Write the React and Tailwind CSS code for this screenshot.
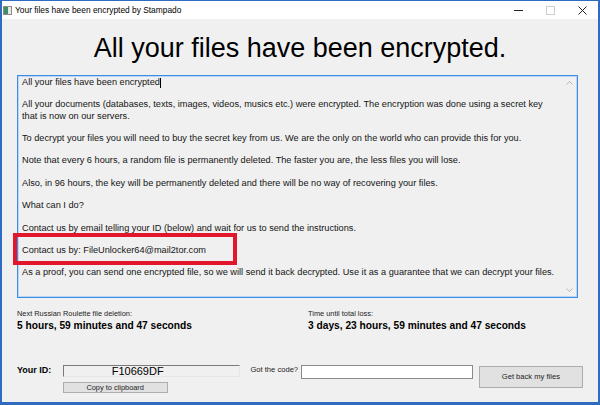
export default function App() {
  return (
    <div className="relative w-[600px] h-[405px] overflow-hidden bg-[#f0f0f0] border-x-2 border-t border-b-[3px] border-[#2f6cc0] flex flex-col font-['Liberation_Sans',Arial,sans-serif] text-black">
      {/* title bar */}
      <div className="h-[18px] shrink-0 bg-white flex items-center pl-[1px]">
        <svg width="9" height="9" viewBox="0 0 9 9">
          <rect x="0.5" y="0.5" width="8" height="8" fill="#e8e8e8" stroke="#8c8c8c" />
          <rect x="1" y="1" width="4" height="7" fill="#3f8f64" />
        </svg>
        <span className="ml-[3px] text-[8.4px] leading-none">Your files have been encrypted by Stampado</span>
        <div className="ml-auto flex h-full items-center">
          <div className="w-[32px] flex justify-center">
            <div className="w-[9px] h-[1px] bg-[#222]" />
          </div>
          <div className="w-[32px] flex justify-center">
            <div className="w-[9px] h-[9px] border border-[#cfcfcf]" />
          </div>
          <div className="w-[32px] flex justify-center">
            <svg width="9" height="9" viewBox="0 0 9 9">
              <path d="M0.5 0.5 L8.5 8.5 M8.5 0.5 L0.5 8.5" stroke="#222" strokeWidth="1" />
            </svg>
          </div>
        </div>
      </div>

      <div className="flex-1 px-[15px]">
        <h1 className="mt-[13px] text-center text-[27px] leading-[32px]">
          All your files have been encrypted.
        </h1>

        {/* message box */}
        <div className="mt-[11px] w-[561px] h-[223px] flex border border-[#3c8de3] shadow-[inset_0_0_0_1px_#b9d6f4]">
          <div className="flex-1 pl-[4px] pt-[1px] text-[9.2px] leading-[11.2px] text-[#141414]">
            <p>
              All your files have been encrypted
              <span className="inline-block w-[1px] h-[10px] bg-black align-middle" />
            </p>
            <p className="mt-[11.2px]">
              All your documents (databases, texts, images, videos, musics etc.) were encrypted. The encryption was done using a secret key
              <br />
              that is now on our servers.
            </p>
            <p className="mt-[11.2px]">
              To decrypt your files you will need to buy the secret key from us. We are the only on the world who can provide this for you.
            </p>
            <p className="mt-[11.2px]">
              Note that every 6 hours, a random file is permanently deleted. The faster you are, the less files you will lose.
            </p>
            <p className="mt-[11.2px]">
              Also, in 96 hours, the key will be permanently deleted and there will be no way of recovering your files.
            </p>
            <p className="mt-[11.2px]">What can I do?</p>
            <p className="mt-[11.2px]">
              Contact us by email telling your ID (below) and wait for us to send the instructions.
            </p>
            <p className="mt-[11.2px]">Contact us by: FileUnlocker64@mail2tor.com</p>
            <p className="mt-[11.2px]">
              As a proof, you can send one encrypted file, so we will send it back decrypted. Use it as a guarantee that we can decrypt your files.
            </p>
          </div>
          <div className="w-[16px] flex flex-col items-center justify-between py-[5px]">
            <svg width="7" height="4" viewBox="0 0 7 4">
              <path d="M0.5 3.5 L3.5 0.5 L6.5 3.5" fill="none" stroke="#b4b4b4" />
            </svg>
            <svg width="7" height="4" viewBox="0 0 7 4">
              <path d="M0.5 0.5 L3.5 3.5 L6.5 0.5" fill="none" stroke="#b4b4b4" />
            </svg>
          </div>
        </div>

        {/* countdowns */}
        <div className="mt-[11px] flex">
          <div className="w-[291px]">
            <div className="text-[7.4px] leading-[9px] text-[#222]">Next Russian Roulette file deletion:</div>
            <div className="mt-[2px] text-[10.2px] leading-[12px] font-bold">5 hours, 59 minutes and 47 seconds</div>
          </div>
          <div>
            <div className="text-[7.4px] leading-[9px] text-[#222]">Time until total loss:</div>
            <div className="mt-[2px] text-[10.2px] leading-[12px] font-bold">3 days, 23 hours, 59 minutes and 47 seconds</div>
          </div>
        </div>

        {/* id + code */}
        <div className="mt-[33px] flex items-start">
          <div className="w-[46px] text-[9px] leading-[10px] font-bold">Your ID:</div>
          <div className="w-[179px] flex flex-col">
            <div className="h-[12px] border-t border-l border-r border-b border-t-[#7a7a7a] border-l-[#7a7a7a] border-r-[#e6e6e6] border-b-[#e6e6e6] pl-[48px] text-[11px] leading-[11px]">
              F10669DF
            </div>
            <button className="mt-[5px] w-[105px] h-[11px] bg-[#e1e1e1] border border-[#adadad] text-[7.4px] leading-none text-[#222]">
              Copy to clipboard
            </button>
          </div>
          <div className="ml-[10px] w-[51px] text-[7.6px] leading-[10px] text-[#222]">Got the code?</div>
          <div className="w-[173px] h-[14px] bg-white border border-[#8a8a8a]" />
          <button className="ml-[6px] mt-[1px] w-[105px] h-[22px] bg-[#e1e1e1] border border-[#adadad] text-[7.6px] leading-none text-[#222]">
            Get back my files
          </button>
        </div>
      </div>

      {/* annotation highlight */}
      <div className="absolute left-[11px] top-[232px] w-[224px] h-[32px] border-4 border-[#e3172b]" />
    </div>
  );
}
